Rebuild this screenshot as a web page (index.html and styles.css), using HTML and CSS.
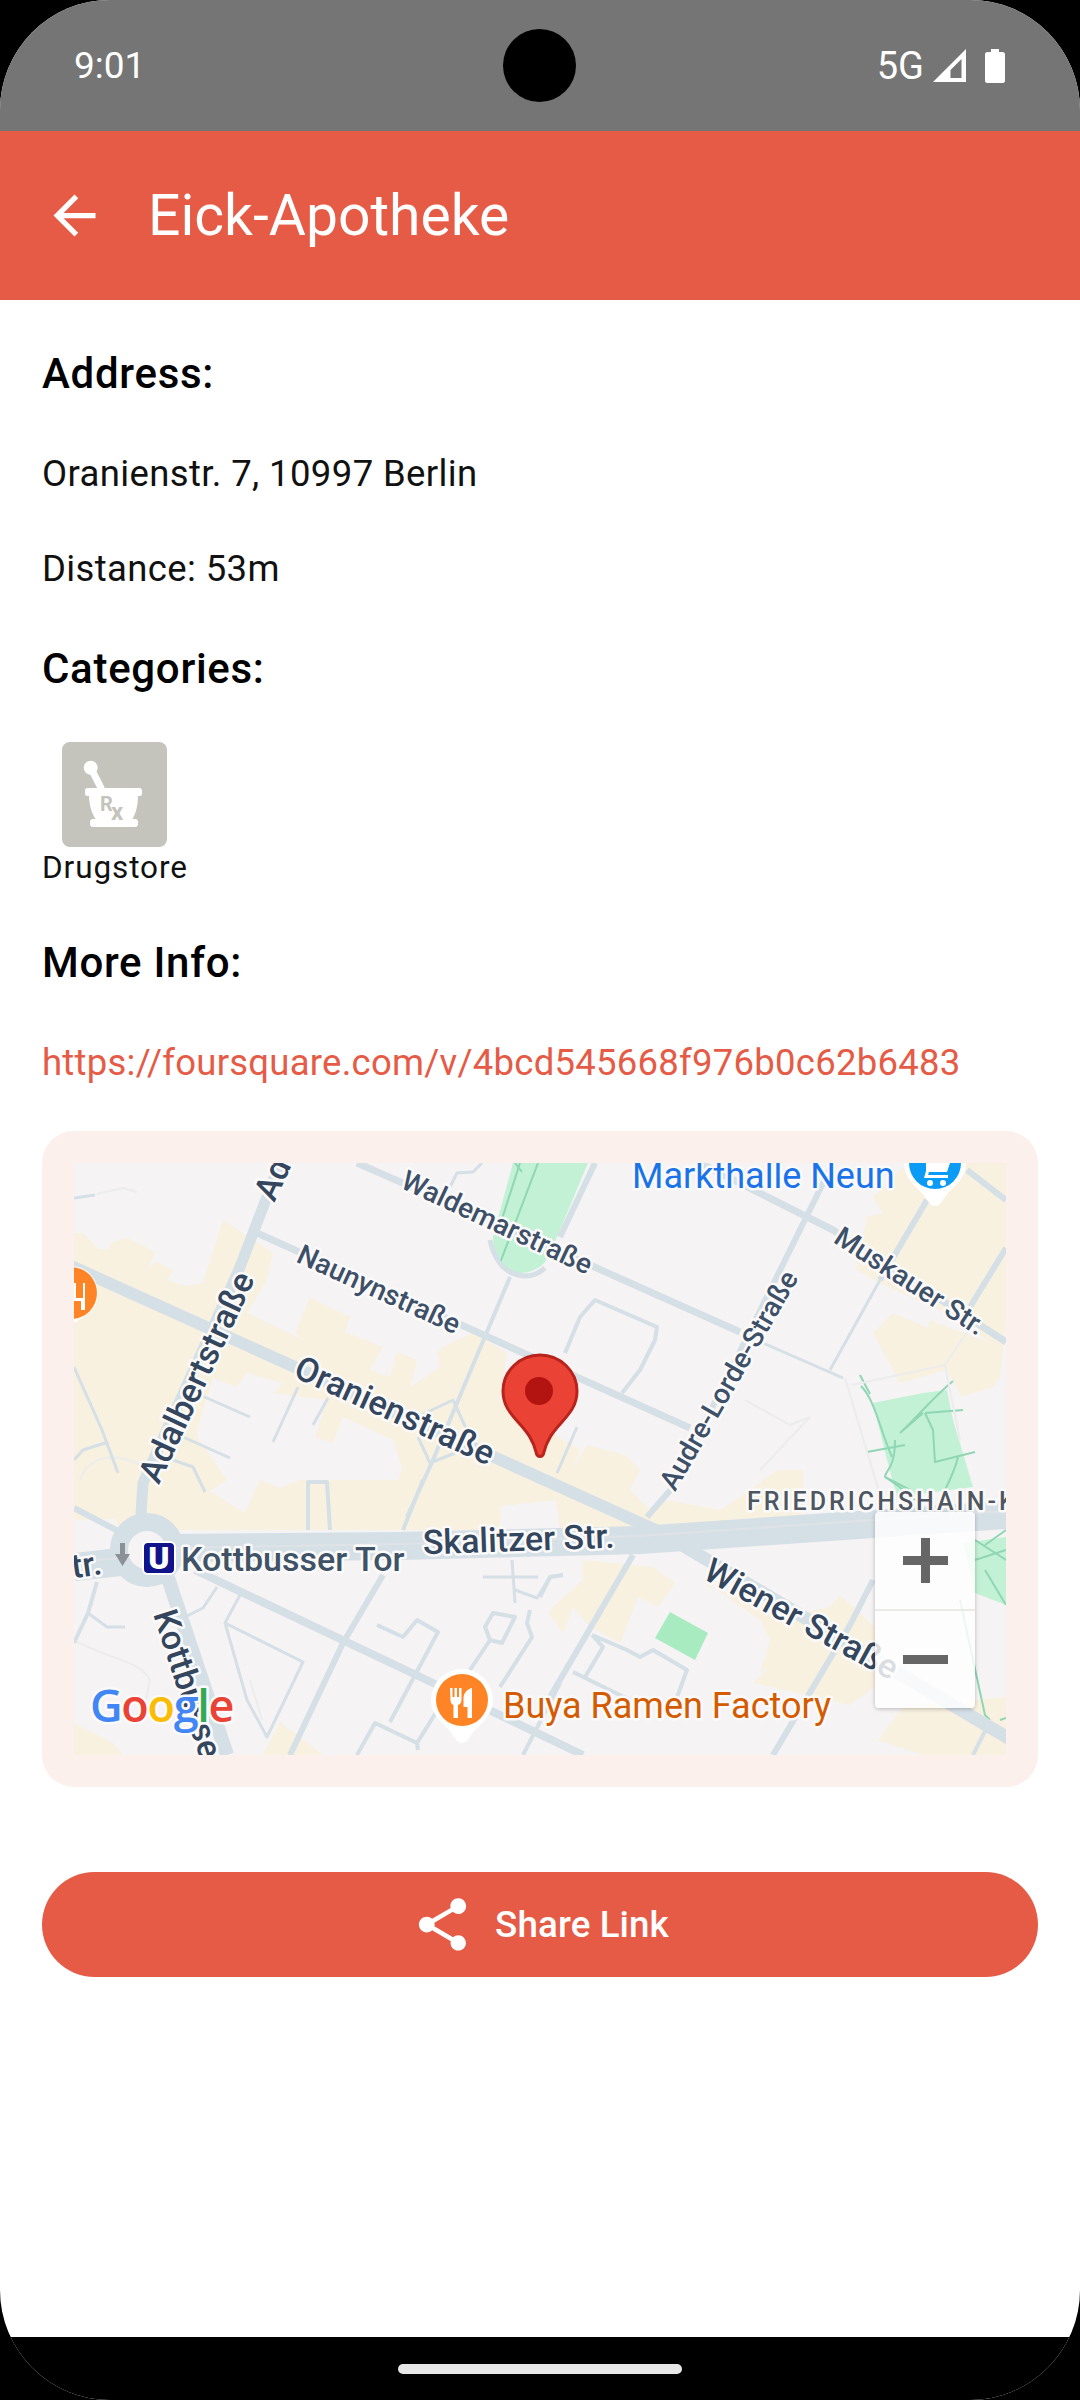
FILE: index.html
```html
<!DOCTYPE html>
<html lang="en">
<head>
<meta charset="utf-8">
<title>Eick-Apotheke</title>
<link rel="stylesheet" href="styles.css">
</head>
<body>
<div class="screen">
  <header class="status">
    <span class="time">9:01</span>
    <span class="camera"></span>
    <div class="status-right">
      <span class="net">5G</span>
      <svg class="signal" viewBox="0 0 33 33"><path fill-rule="evenodd" d="M0 33L33 0V33ZM17.5 29H28.5V10L17.5 21Z"/></svg>
      <svg class="battery" viewBox="0 0 20 34"><path d="M6 0h8v3h3.5A2.5 2.5 0 0 1 20 5.500V31.500A2.500 2.500 0 0 1 17.500 34H2.500A2.500 2.500 0 0 1 0 31.500V5.500A2.500 2.500 0 0 1 2.500 3H6Z"/></svg>
    </div>
  </header>
  <div class="appbar">
    <svg class="back" viewBox="0 0 24 24"><path d="M20 11H7.830l5.590-5.590L12 4l-8 8 8 8 1.410-1.410L7.830 13H20v-2z"/></svg>
    <h1 class="title">Eick-Apotheke</h1>
  </div>
  <main class="content">
    <h2 class="heading">Address:</h2>
    <p class="body">Oranienstr. 7, 10997 Berlin</p>
    <p class="body">Distance: 53m</p>
    <h2 class="heading">Categories:</h2>
    <div class="category">
      <svg class="cat-icon" viewBox="0 0 105 105">
        <rect class="cat-bg" width="105" height="105" rx="8"/>
        <circle class="cat-w" cx="28.700" cy="25.700" r="7"/>
        <path class="cat-pestle" d="M28.700 25.700L39.500 47"/>
        <rect class="cat-w" x="23" y="46" width="57" height="8" rx="2.500"/>
        <path class="cat-w" d="M27 53H76C76 65 73 74 69 79H35C31 74 27 65 27 53Z"/>
        <rect class="cat-w" x="28" y="77" width="48" height="8" rx="3"/>
        <text class="cat-r" x="38" y="69">R</text>
        <text class="cat-x" x="49" y="78">x</text>
      </svg>
      <span class="cat-label">Drugstore</span>
    </div>
    <h2 class="heading">More Info:</h2>
    <a class="link" href="#">https://foursquare.com/v/4bcd545668f976b0c62b6483</a>
    <section class="map-card">
      <div class="map">
        <svg class="map-svg" viewBox="74 1163 932 592">
          <rect class="m-land" x="74" y="1163" width="932" height="592"/>
          <g class="m-built">
            <polygon points="74,1233 83,1233 97,1248 108,1250 112,1242 127,1238 155,1252 148,1268 157,1262 173,1270 168,1280 185,1286 203,1283 223,1220 273,1253 267,1280 247,1313 297,1337 303,1340 295,1333 310,1297 350,1317 345,1332 383,1347 370,1370 390,1377 397,1352 417,1360 410,1387 440,1367 437,1353 443,1347 473,1333 507,1353 500,1400 580,1450 560,1500 460,1510 440,1497 395,1520 390,1507 402,1467 393,1440 343,1417 333,1443 315,1437 327,1400 273,1393 283,1383 247,1373 237,1387 213,1378 200,1420 197,1437 227,1480 207,1493 180,1517 74,1520"/>
            <polygon points="83,1487 113,1513 120,1533 127,1530 500,1530 500,1483 457,1485 437,1488 410,1480 300,1480 280,1488 260,1480 255,1490 245,1513 200,1485 180,1497 160,1520 130,1500 125,1480 85,1480"/>
            <polygon points="555,1495 573,1468 587,1445 625,1455 640,1470 630,1490 660,1520 680,1530 560,1530"/>
            <polygon points="743,1495 777,1470 803,1470 803,1517 700,1530 640,1530 620,1520 667,1500 720,1510"/>
            <polygon points="856,1270 867,1217 883,1213 873,1197 907,1163 1006,1163 1006,1320 1000,1377 993,1387 962,1397 947,1370 900,1383 873,1333 893,1313 928,1328 930,1320 990,1343 960,1320 880,1283"/>
            <polygon points="583,1560 653,1567 675,1583 658,1607 638,1597 620,1643 590,1627 573,1607 563,1633 548,1612 583,1580"/>
            <polygon points="707,1583 760,1620 770,1640 760,1673 770,1667 753,1683 850,1705 875,1687 875,1627 840,1595 830,1607 800,1613 707,1587"/>
            <polygon points="878,1740 903,1707 1006,1697 1006,1755 923,1755"/>
            <polygon points="74,1723 113,1743 123,1755 74,1755"/>
            <polygon points="263,1755 280,1722 323,1755"/>
          </g>
          <g class="m-park">
            <path d="M513 1163L493 1237C493 1262 505 1273 520 1273C530 1273 540 1268 545 1262L557 1237L588 1163Z"/>
            <polygon points="873,1403 923,1393 947,1390 953,1420 973,1487 897,1497 887,1460"/>
            <polygon points="963,1543 1006,1537 1006,1605 975,1593"/>
          </g>
          <polygon class="m-park2" points="670,1612 708,1633 695,1660 655,1638"/>
          <g class="m-path">
            <path d="M520 1163L500 1225 M515 1163L522 1172 M538 1163L500 1263"/>
            <path d="M860 1375L870 1394 M861 1386C875 1400 880 1430 892 1457 M953 1381C930 1400 915 1420 900 1433 M900 1433L923 1413 M925 1413L963 1410 M925 1413L933 1430L935 1462L975 1452 M958 1457C955 1470 950 1480 945 1490 M867 1452L905 1445 M895 1440C895 1470 885 1470 885 1477C905 1490 905 1492 915 1500 M885 1477L910 1490"/>
            <path d="M975 1540L1006 1560 M985 1545L1006 1530 M975 1560L1006 1550 M985 1570L1006 1605 M960 1600L985 1715L990 1720 M1000 1720L1006 1718"/>
          </g>
          <g class="m-faint">
            <path d="M97 1194L123 1188L137 1192 M745 1400L790 1425 M790 1425L810 1417L760 1470 M845 1378L880 1495 M852 1385L945 1365 M945 1365L960 1440 M945 1365L975 1320 M80 1480C90 1450 130 1450 160 1480 M74 1640C110 1660 140 1660 150 1680L145 1705 M250 1680L262 1720"/>
          </g>
          <g class="m-road">
            <path class="w3" d="M74 1198L95 1195 M200 1395L250 1417 M273 1442L298 1387 M313 1425L328 1398 M183 1437L230 1458 M74 1367L102 1430L118 1473 M74 1460L83 1450L108 1442 M173 1460L193 1467L205 1492 M450 1187L457 1173L473 1172L482 1163 M417 1417L453 1400L470 1437 M430 1463L418 1437 M430 1463L455 1453 M557 1473L577 1427 M512 1560L515 1603 M483 1577L538 1577 M515 1590L537 1598L550 1577L563 1575 M88 1613L107 1627L125 1627 M185 1617L203 1608L217 1587 M225 1623L303 1662L267 1737L247 1700Z M240 1595L225 1623 M763 1343L843 1378 M880 1280L830 1370"/>
            <path class="w4" d="M97 1582L88 1613L74 1643 M565 1353L580 1317L595 1300L657 1327L655 1340L640 1370L622 1393 M377 1625L403 1637L417 1620L438 1632L390 1722 M357 1755L375 1723L417 1743L418 1750 M417 1743L450 1690 M470 1670L490 1640L485 1627L493 1613L515 1617L502 1643L490 1640 M530 1610L527 1623L532 1637L500 1687 M308 1530L308 1482L327 1482L330 1530 M592 1635L603 1647L585 1677 M592 1635L627 1650L640 1657L653 1650L687 1670L677 1697 M573 1672L630 1700 M560 1683L523 1755 M540 1597L550 1577L563 1575 M987 1727L973 1755 M510 1277L433 1460L407 1517 M403 1530L423 1480"/>
            <path class="w6" d="M595 1163L560 1237 M833 1163L673 1487L647 1517 M633 1555L550 1697 M873 1580L850 1625L773 1755 M383 1575L343 1643L290 1755 M927 1200L880 1280 M1006 1248L970 1307 M967 1170L1006 1200 M74 1508L120 1532"/>
            <path class="w7" d="M357 1163L590 1265L740 1332 M257 1233L690 1428 M700 1163L833 1230L1006 1342"/>
            <path class="w8" d="M195 1570L433 1683L583 1755"/>
            <path class="w5" d="M490 1240C495 1262 505 1275 525 1276C535 1276 540 1272 545 1268"/>
            <path class="w11" d="M280 1163L240 1267L143 1483L141 1513L147 1525"/>
            <path class="w12" d="M60 1261L660 1532"/>
            <path class="w13" d="M660 1532L1020 1745"/>
            <path class="w14" d="M168 1578L227 1755"/>
            <circle class="w16" cx="147" cy="1550" r="28"/>
            <path class="w30" d="M74 1567L120 1562 M170 1548L400 1546L640 1540L873 1524L1006 1515"/>
          </g>
          <path class="m-stripe" d="M74 1562L120 1558 M175 1548L400 1544L640 1536L873 1520L1006 1511"/>
          <g class="m-label">
            <text class="l-road" transform="translate(390 1421) rotate(24.500)">Oranienstraße</text>
            <text class="l-road" transform="translate(207 1382) rotate(-65)">Adalbertstraße</text>
            <text class="l-road" transform="translate(283 1184) rotate(-65)">Ad</text>
            <text class="l-road-s" transform="translate(375 1298) rotate(24.500)">Naunynstraße</text>
            <text class="l-road-s" transform="translate(493 1231) rotate(25)">Waldemarstraße</text>
            <text class="l-road-s" transform="translate(905 1289) rotate(33)">Muskauer Str.</text>
            <text class="l-road-s" transform="translate(737 1385) rotate(-60)">Audre-Lorde-Straße</text>
            <text class="l-road" transform="translate(519 1551) rotate(-2)">Skalitzer Str.</text>
            <text class="l-road l-start" transform="translate(153 1614) rotate(72)">Kottbusser</text>
            <text class="l-road l-end" transform="translate(103 1574) rotate(-8)">Str.</text>
            <text class="l-road" transform="translate(796 1629) rotate(28.500)">Wiener Straße</text>
            <text class="l-stop" x="181" y="1571">Kottbusser Tor</text>
            <text class="l-area" x="747" y="1510">FRIEDRICHSHAIN-KREUZBERG</text>
            <text class="l-blue" x="632" y="1188">Markthalle Neun</text>
            <text class="l-orange" x="503" y="1718">Buya Ramen Factory</text>
          </g>
          <path class="m-arrow" d="M120 1543h5v11h5l-7.500 12l-7.500-12h5z"/>
          <rect class="u-bg" x="143" y="1542" width="32" height="32" rx="5"/>
          <text class="u-text" x="159" y="1569">U</text>
          <g class="m-poi">
            <g>
              <path class="poi-w" d="M44 1293a27 27 0 0 1 54 0c0 12-8 20-16 25l-6 4h-6l-6-4c-8-5-20-13-20-25z"/>
              <circle class="poi-o" cx="71" cy="1293" r="26"/>
              <path class="poi-g" d="M74 1283h2v15h7v-15h2v27h-4v-9h-7z"/>
            </g>
            <g>
              <path class="poi-w" d="M431 1700a31 31 0 0 1 62 0c0 14-10 22-18 30l-8 11a7 7 0 0 1-10 0l-8-11c-8-8-18-16-18-30z"/>
              <circle class="poi-o" cx="462" cy="1700" r="26"/>
              <path class="poi-g" d="M450 1688h2.500v9h2v-9h2.500v9h2v-9h2.500v12c0 3-2 4.500-3.500 5v13h-4.500v-13c-1.500-.5-3-2-3-5z M472 1688v30h-4.500v-11h-4v-9c0-5 4-9 8.500-10z"/>
            </g>
            <g>
              <path class="poi-w" d="M904 1163a31 31 0 0 1 62 0c0 14-10 22-18 30l-8 11a7 7 0 0 1-10 0l-8-11c-8-8-18-16-18-30z"/>
              <circle class="poi-b" cx="935" cy="1163" r="26"/>
              <path class="poi-g" d="M926 1163h24l-3 9h-18l-1 3h20v3h-24l2-7z"/>
              <circle class="poi-g" cx="930" cy="1183" r="3"/>
              <circle class="poi-g" cx="943" cy="1183" r="3"/>
            </g>
          </g>
          <path class="pin" d="M540 1355C560 1355 577 1371 577 1391C577 1405 570 1413 562 1422C552 1433 547 1440 544 1452C543 1458 537 1458 536 1452C533 1440 528 1433 518 1422C510 1413 503 1405 503 1391C503 1371 520 1355 540 1355Z"/>
          <circle class="pin-dot" cx="539" cy="1391" r="14"/>
          <text class="google" x="90" y="1722"><tspan class="g-b">G</tspan><tspan class="g-r">o</tspan><tspan class="g-y">o</tspan><tspan class="g-b">g</tspan><tspan class="g-g">l</tspan><tspan class="g-r">e</tspan></text>
        </svg>
        <div class="zoom-ctrl">
          <div class="zoom-btn">
            <svg class="zoom-ic" viewBox="0 0 45 45"><path d="M18 0h9v18h18v9H27v18h-9V27H0v-9h18z"/></svg>
          </div>
          <div class="zoom-btn">
            <svg class="zoom-ic" viewBox="0 0 45 45"><path d="M0 18h45v9H0z"/></svg>
          </div>
        </div>
      </div>
    </section>
    <button class="share" type="button">
      <svg class="share-ic" viewBox="0 0 24 24"><path d="M18 16.080c-.76 0-1.440.3-1.960.77L8.910 12.700c.05-.23.09-.46.09-.7s-.04-.47-.09-.7l7.050-4.110c.54.5 1.250.81 2.040.81 1.660 0 3-1.340 3-3s-1.340-3-3-3-3 1.340-3 3c0 .24.04.47.09.7L8.040 9.810C7.500 9.310 6.790 9 6 9c-1.660 0-3 1.340-3 3s1.340 3 3 3c.79 0 1.500-.31 2.040-.81l7.120 4.160c-.05.21-.08.43-.08.65 0 1.610 1.310 2.920 2.920 2.920 1.610 0 2.920-1.310 2.920-2.920s-1.310-2.920-2.920-2.920z"/></svg>
      <span>Share Link</span>
    </button>
  </main>
  <footer class="navbar"><span class="handle"></span></footer>
</div>
</body>
</html>
```

FILE: styles.css
```css
* { box-sizing: border-box; }
html, body { margin: 0; padding: 0; background: #000; }
body { width: 1080px; height: 2400px; font-family: Roboto, "Noto Sans", sans-serif; overflow: hidden; }
.screen { position: relative; width: 1080px; height: 2400px; background: #fff; border-radius: 110px; overflow: hidden; display: flex; flex-direction: column; }

.status { position: relative; height: 131px; flex: none; background: #757575; color: #fff; display: flex; align-items: center; justify-content: space-between; padding: 0 75px 0 74px; }
.time { font-size: 37px; }
.camera { position: absolute; left: 503px; top: 29px; width: 73px; height: 73px; border-radius: 50%; background: #000; }
.status-right { display: flex; align-items: center; }
.net { font-size: 38px; margin-right: 9px; }
.signal { width: 33px; height: 33px; fill: #fff; margin-right: 19px; }
.battery { width: 20px; height: 34px; fill: #fff; }

.appbar { height: 169px; flex: none; background: #e55b46; display: flex; align-items: center; padding-left: 43px; gap: 42px; }
.back { width: 63px; height: 63px; fill: #fff; }
.title { margin: 0; font-size: 57px; font-weight: 400; color: #fff; }

.content { flex: 1; display: flex; flex-direction: column; align-items: flex-start; gap: 42px; padding: 42px 42px 0; }
.heading { margin: 0; font-size: 42px; line-height: 63px; font-weight: 500; letter-spacing: .7px; color: #000; }
.body { margin: 0; font-size: 36.500px; line-height: 53px; letter-spacing: .37px; color: #111; }
.category { display: flex; flex-direction: column; align-items: center; }
.cat-icon { width: 105px; height: 105px; display: block; }
.cat-bg { fill: #c4c3bc; }
.cat-w { fill: #fff; }
.cat-pestle { stroke: #fff; stroke-width: 7px; fill: none; }
.cat-r { font-size: 20px; fill: #c4c3bc; font-weight: 700; }
.cat-x { font-size: 24px; fill: #c4c3bc; font-weight: 700; }
.cat-label { font-size: 31.500px; line-height: 42px; letter-spacing: .9px; color: #111; }
.link { font-size: 36.500px; line-height: 53px; letter-spacing: .25px; color: #e55b46; text-decoration: none; }

.map-card { width: 996px; height: 656px; background: #fcf0ed; border-radius: 32px; padding: 32px; flex: none; }
.map { position: relative; width: 932px; height: 592px; overflow: hidden; }
.map-svg { display: block; width: 932px; height: 592px; }
.m-land { fill: #f5f3f4; }
.m-built { fill: #f8f1e0; }
.m-park { fill: #c3f1d6; }
.m-park2 { fill: #a8ebc0; }
.m-path { fill: none; stroke: #8fd6b4; stroke-width: 2px; }
.m-faint { fill: none; stroke: #ececec; stroke-width: 2px; }
.m-road { fill: none; stroke: #d5dfe6; stroke-linejoin: round; }
.w3 { stroke-width: 3px; }
.w4 { stroke-width: 4px; }
.w5 { stroke-width: 5px; }
.w6 { stroke-width: 6px; }
.w7 { stroke-width: 7px; }
.w8 { stroke-width: 8px; }
.w11 { stroke-width: 11px; }
.w12 { stroke-width: 12px; }
.w13 { stroke-width: 13px; }
.w14 { stroke-width: 14px; }
.w16 { stroke-width: 18px; }
.w30 { stroke-width: 28px; }
.m-stripe { fill: none; stroke: #dfe3e6; stroke-width: 2px; }
.m-label text { paint-order: stroke; stroke: #fbfafa; stroke-linejoin: round; stroke-width: 5px; }
.l-road { font-size: 34px; font-weight: 500; fill: #34465e; text-anchor: middle; }
.l-road-s { font-size: 28px; font-weight: 500; fill: #3e5068; text-anchor: middle; }
.m-label .l-start { text-anchor: start; }
.m-label .l-end { text-anchor: end; }
.l-stop { font-size: 34px; font-weight: 500; fill: #3f5266; }
.l-area { font-size: 25px; font-weight: 500; letter-spacing: 3px; fill: #4e5661; }
.l-blue { font-size: 36px; fill: #1a73e8; }
.l-orange { font-size: 36px; fill: #d45b00; }
.m-arrow { fill: #8b9196; }
.u-bg { fill: #11138b; stroke: #fff; stroke-width: 2px; }
.u-text { font-size: 32px; font-weight: 900; fill: #fff; text-anchor: middle; }
.poi-w { fill: #fff; }
.poi-o { fill: #ff8426; }
.poi-b { fill: #0a9bf7; }
.poi-g { fill: #fff; }
.pin { fill: #ea4335; stroke: #b8231c; stroke-width: 3px; }
.pin-dot { fill: #b31412; }
.google { font-family: "Open Sans", sans-serif; font-size: 45px; font-weight: 600; letter-spacing: -1.300px; paint-order: stroke; stroke: #fbfafa; stroke-width: 5px; stroke-linejoin: round; }
.g-b { fill: #4285f4; }
.g-r { fill: #ea4335; }
.g-y { fill: #fbbc05; }
.g-g { fill: #34a853; }

.zoom-ctrl { position: absolute; left: 801px; top: 349px; width: 100px; height: 196px; border-radius: 4px; background: rgba(255, 255, 255, .82); box-shadow: 0 1px 4px rgba(0, 0, 0, .25); display: flex; flex-direction: column; }
.zoom-btn { flex: 1; display: flex; align-items: center; justify-content: center; }
.zoom-btn + .zoom-btn { border-top: 2px solid rgba(225, 225, 220, .7); }
.zoom-ic { width: 45px; height: 45px; fill: #666; }

.share { width: 996px; height: 105px; flex: none; margin-top: 43px; border: 0; border-radius: 53px; background: #e55b46; color: #fff; font: 500 36.750px Roboto, sans-serif; letter-spacing: .1px; display: flex; align-items: center; justify-content: center; gap: 21px; padding: 0; }
.share-ic { width: 63px; height: 63px; fill: #fff; }

.navbar { position: absolute; left: 0; right: 0; bottom: 0; height: 63px; background: #000; display: flex; justify-content: center; padding-top: 27px; }
.handle { width: 284px; height: 10px; border-radius: 5px; background: #e8e8e8; }
```
